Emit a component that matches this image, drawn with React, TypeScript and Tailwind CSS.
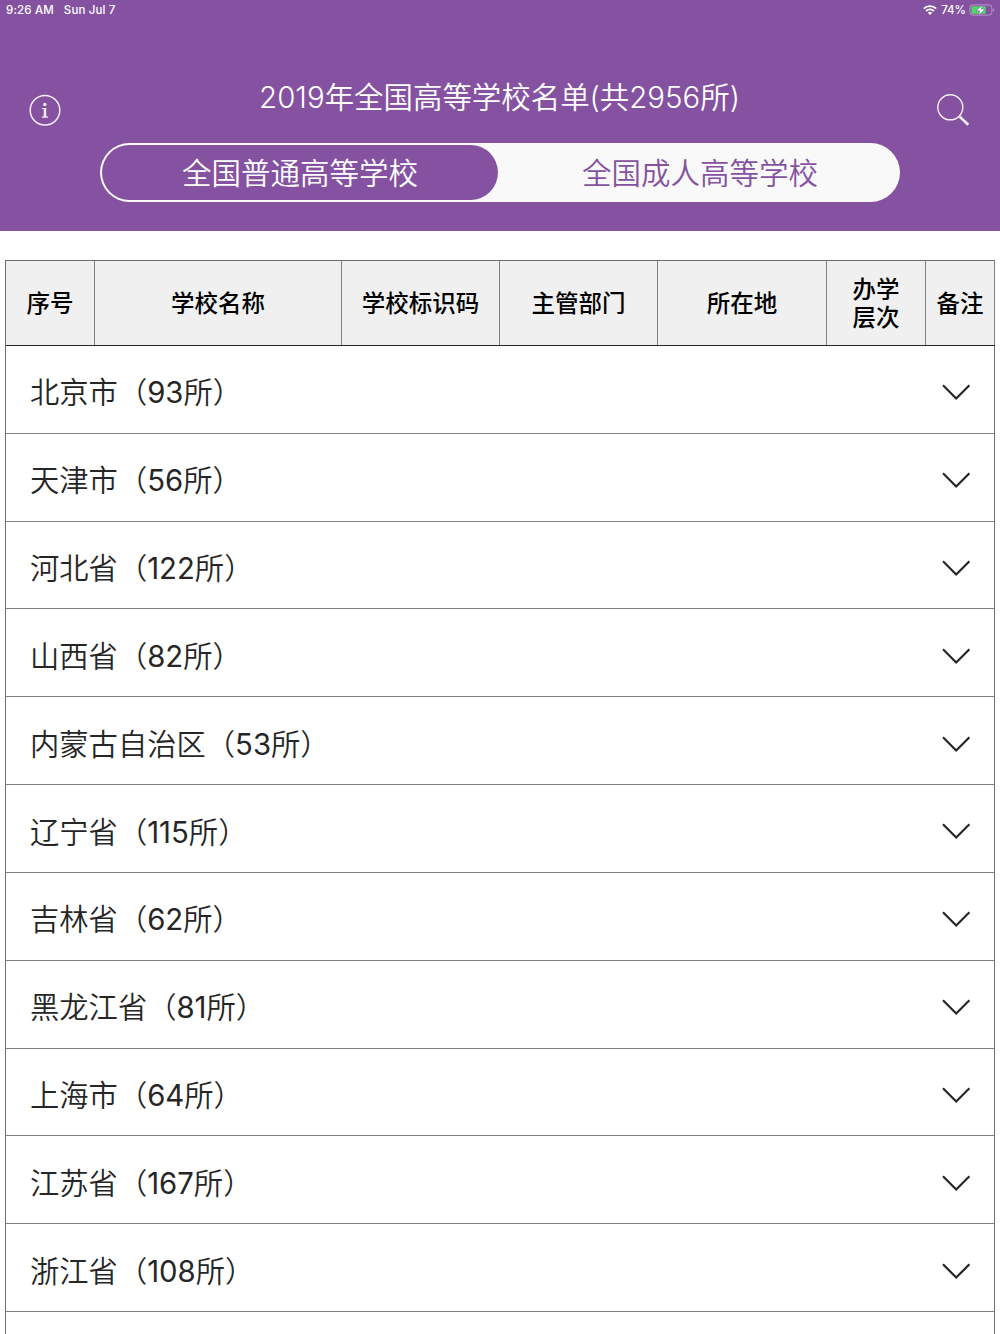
import { useState } from 'react';
import clsx from 'clsx';

const tabs = ['全国普通高等学校', '全国成人高等学校'];

const columns = [
  { label: '序号', width: 'w-[89px]' },
  { label: '学校名称', width: 'w-[247px]' },
  { label: '学校标识码', width: 'w-[158px]' },
  { label: '主管部门', width: 'w-[158px]' },
  { label: '所在地', width: 'w-[169px]' },
  { label: '办学\n层次', width: 'w-[99px]' },
  { label: '备注', width: 'w-[69px]' },
];

const regions = [
  { name: '北京市', count: 93 },
  { name: '天津市', count: 56 },
  { name: '河北省', count: 122 },
  { name: '山西省', count: 82 },
  { name: '内蒙古自治区', count: 53 },
  { name: '辽宁省', count: 115 },
  { name: '吉林省', count: 62 },
  { name: '黑龙江省', count: 81 },
  { name: '上海市', count: 64 },
  { name: '江苏省', count: 167 },
  { name: '浙江省', count: 108 },
];

const StatusBar = () => (
  <div className="flex h-5 items-center justify-between pl-1.5 pr-[5px] text-[11.5px] font-medium leading-5">
    <div className="flex gap-[10px] tracking-[0.15px]">
      <span>9:26 AM</span>
      <span>Sun Jul 7</span>
    </div>
    <div className="flex items-center">
      <svg className="mr-[4px] h-[10px] w-[14px]" viewBox="0 0 14 10" fill="none" stroke="currentColor" strokeWidth="1.8">
        <path d="M0.8 3.6a8.8 8.8 0 0 1 12.4 0" />
        <path d="M3.1 6a5.5 5.5 0 0 1 7.8 0" />
        <path d="M7 10 4.9 7.8a3 3 0 0 1 4.2 0Z" fill="currentColor" stroke="none" />
      </svg>
      <span>74%</span>
      <svg className="ml-[3px] h-3 w-[26px]" viewBox="0 0 26 12">
        <rect x="0.9" y="0.9" width="22" height="10.2" rx="3" fill="none" stroke="#b798c6" />
        <rect x="2.4" y="2.2" width="14.4" height="7.6" rx="1.4" fill="#4cd964" />
        <path d="M24.1 4.2c1.6.5 1.6 3.1 0 3.6Z" fill="#b798c6" />
        <path d="M14 1 7 6.8h3.8l-1.6 4.4 7-6h-3.9Z" fill="#fff" stroke="#8552a1" strokeWidth="0.5" />
      </svg>
    </div>
  </div>
);

const InfoIcon = () => (
  <svg className="h-8 w-8" viewBox="0 0 32 32" fill="none">
    <circle cx="16" cy="16.3" r="14.8" stroke="#f6f0f9" strokeWidth="1.5" />
    <circle cx="15.8" cy="10.4" r="1.7" fill="#f6f0f9" />
    <path d="M13.2 13.9h4v8.7h1.7v1.1h-6v-1.1h1.8v-7.6h-1.5Z" fill="#f6f0f9" />
  </svg>
);

const SearchIcon = () => (
  <svg className="h-[34px] w-[34px]" viewBox="0 0 34 34" fill="none" stroke="#f6f0f9">
    <circle cx="13.3" cy="15.3" r="12.5" strokeWidth="1.4" />
    <path d="m22.6 24.6 8.7 8.2" strokeWidth="2.6" />
  </svg>
);

const ChevronDown = () => (
  <svg className="h-[18px] w-[30px]" viewBox="0 0 30 18" fill="none" stroke="#262626" strokeWidth="2.2">
    <path d="M2 2.3 15.2 15.5 28.4 2.3" />
  </svg>
);

export default function App() {
  const [activeTab, setActiveTab] = useState(0);

  return (
    <div className="h-[1334px] overflow-hidden bg-white font-['Inter','Noto_Sans_CJK_SC',sans-serif]" lang="zh-CN">
      <header className="h-[231px] bg-[#8552a1] text-white">
        <StatusBar />
        <div className="flex h-[123px] items-end justify-between px-[29px] pb-[17px]">
          <button className="h-8 w-8" aria-label="info">
            <InfoIcon />
          </button>
          <h1 className="mb-[6px] ml-[1px] whitespace-nowrap text-[29.45px] font-[350] leading-[46px]">
            2019年全国高等学校名单(共2956所)
          </h1>
          <button className="h-[34px] w-[34px]" aria-label="search">
            <SearchIcon />
          </button>
        </div>
        <div className="mx-auto flex h-[59px] w-[800px] gap-1 rounded-full bg-[#f9f9f9] p-[2px]">
          {tabs.map((tab, i) => (
            <button
              key={tab}
              onClick={() => setActiveTab(i)}
              className={clsx(
                'flex-1 rounded-full pt-[2px] text-[29.5px] font-[350] leading-[53px]',
                activeTab === i ? 'bg-[#8552a1] text-white' : 'text-[#8552a1]'
              )}
            >
              {tab}
            </button>
          ))}
        </div>
      </header>

      <main className="mx-[5px] mt-[29px] border-l border-t border-[#6f6f6f]">
        <div className="flex h-[85px] border-b border-[#262626] bg-[#f0f0f0]">
          {columns.map(({ label, width }) => (
            <div
              key={label}
              className={clsx(
                width,
                'flex shrink-0 items-center justify-center whitespace-pre border-r border-[#808080] pt-[2px] text-center text-[23.5px] font-medium leading-7 text-black'
              )}
            >
              {label}
            </div>
          ))}
        </div>
        <ul className="border-r border-[#6f6f6f]">
          {regions.map(({ name, count }) => (
            <li
              key={name}
              className="flex h-[87.82px] items-center justify-between border-b border-[#808080] pl-6 pr-[23px] pt-[6px] text-[29.3px] font-[350] text-[#262626]"
            >
              <span className="whitespace-nowrap">
                {name}
                <span className="font-['Noto_Sans_CJK_SC',sans-serif]">（</span>
                <span className="font-normal">{count}</span>所
                <span className="font-['Noto_Sans_CJK_SC',sans-serif]">）</span>
              </span>
              <ChevronDown />
            </li>
          ))}
          <li className="h-[88px]" />
        </ul>
      </main>
    </div>
  );
}
